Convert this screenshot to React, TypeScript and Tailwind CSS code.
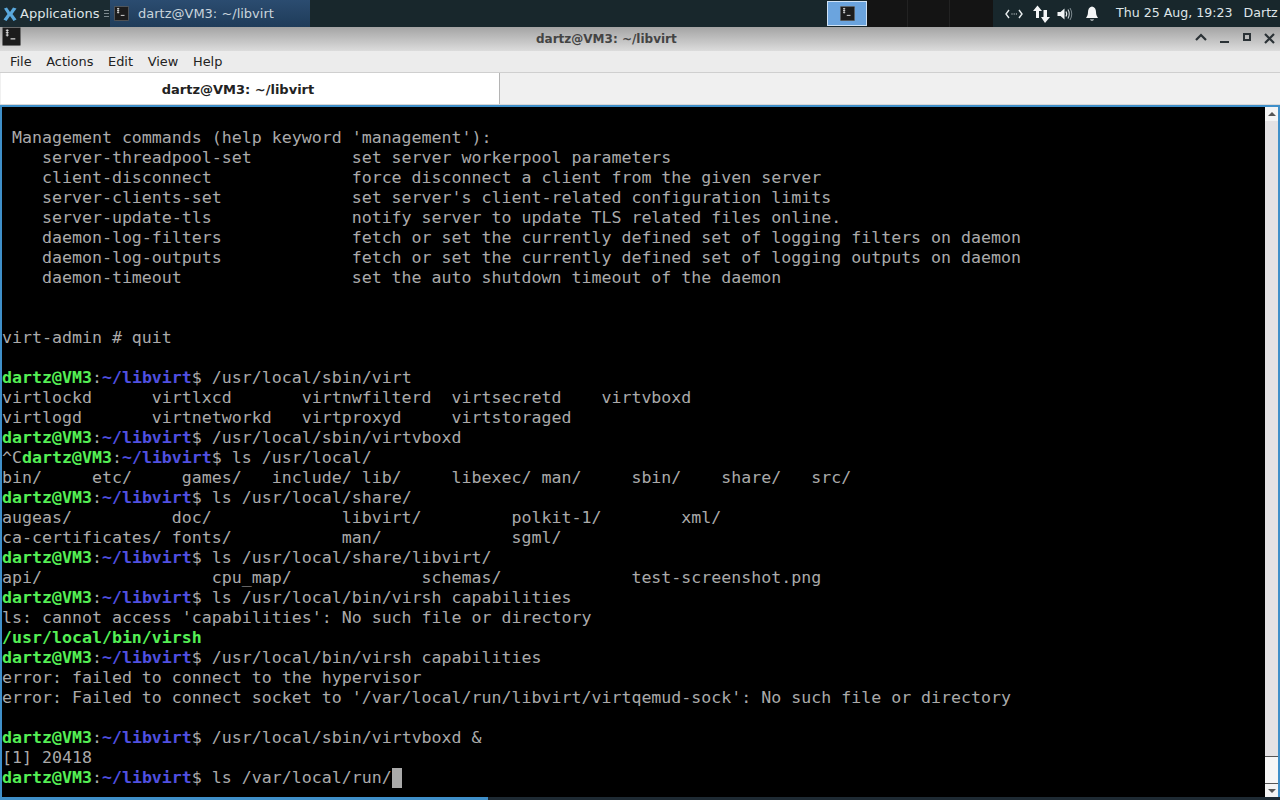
const Prompt = ({ cmd }: { cmd: string }) => (
  <>
    <span className="font-bold text-[#55f055]">dartz@VM3</span>
    <span>:</span>
    <span className="font-bold text-[#5050e0]">~/libvirt</span>
    <span>$ {cmd}</span>
  </>
);

const TermIcon = ({ size = 20 }: { size?: number }) => (
  <svg width={size} height={size} viewBox="0 0 20 20" className="shrink-0">
    <rect x="0.5" y="0.5" width="19" height="19" rx="1" fill="#1c1c1c" stroke="#6a6a6a" />
    <path d="M4 3.5h3M4 6h3M4 8.500h3M5.500 2.500v7.500" stroke="#e8e8e8" strokeWidth="1" fill="none" />
    <path d="M9 12.500h5" stroke="#e8e8e8" strokeWidth="1.200" />
  </svg>
);

const lines: React.ReactNode[] = [
  "",
  " Management commands (help keyword 'management'):",
  "    server-threadpool-set          set server workerpool parameters",
  "    client-disconnect              force disconnect a client from the given server",
  "    server-clients-set             set server's client-related configuration limits",
  "    server-update-tls              notify server to update TLS related files online.",
  "    daemon-log-filters             fetch or set the currently defined set of logging filters on daemon",
  "    daemon-log-outputs             fetch or set the currently defined set of logging outputs on daemon",
  "    daemon-timeout                 set the auto shutdown timeout of the daemon",
  "",
  "",
  "virt-admin # quit",
  "",
  <Prompt cmd="/usr/local/sbin/virt" />,
  "virtlockd      virtlxcd       virtnwfilterd  virtsecretd    virtvboxd",
  "virtlogd       virtnetworkd   virtproxyd     virtstoraged",
  <Prompt cmd="/usr/local/sbin/virtvboxd" />,
  <>^C<Prompt cmd="ls /usr/local/" /></>,
  "bin/     etc/     games/   include/ lib/     libexec/ man/     sbin/    share/   src/",
  <Prompt cmd="ls /usr/local/share/" />,
  "augeas/          doc/             libvirt/         polkit-1/        xml/",
  "ca-certificates/ fonts/           man/             sgml/",
  <Prompt cmd="ls /usr/local/share/libvirt/" />,
  "api/                 cpu_map/             schemas/             test-screenshot.png",
  <Prompt cmd="ls /usr/local/bin/virsh capabilities" />,
  "ls: cannot access 'capabilities': No such file or directory",
  <span className="font-bold text-[#55f055]">/usr/local/bin/virsh</span>,
  <Prompt cmd="/usr/local/bin/virsh capabilities" />,
  "error: failed to connect to the hypervisor",
  "error: Failed to connect socket to '/var/local/run/libvirt/virtqemud-sock': No such file or directory",
  "",
  <Prompt cmd="/usr/local/sbin/virtvboxd &" />,
  "[1] 20418",
  <>
    <Prompt cmd="ls /var/local/run/" />
    <span className="inline-block w-[10px] h-[20px] align-top bg-[#aaaaaa]" />
  </>,
];

export default function App() {
  return (
    <div className="w-[1280px] h-[800px] overflow-hidden flex flex-col bg-black font-['DejaVu_Sans',sans-serif]">
      {/* panel */}
      <div className="h-[27px] shrink-0 flex items-center bg-[#18272c] text-[13px] text-[#dfe5e8]">
        <div className="w-[110px] flex items-center pl-[2px] shrink-0 bg-[#1b2b31] h-full">
          <svg width="16" height="16" viewBox="0 0 16 16" className="shrink-0">
            <path d="M2 2.500 L5 1.500 L8 6 L11 1.500 L14.500 2.500 L10.500 8 L14.500 13.500 L11.500 15 L8 10 L4.500 15 L1.500 13.500 L5.500 8 Z" fill="#5aa8dc" />
          </svg>
          <span className="ml-[2px]">Applications</span>
          <span className="ml-[5px] flex flex-col gap-[2px]">
            <span className="block w-[5px] h-px bg-[#7d8a8f]" />
            <span className="block w-[5px] h-px bg-[#7d8a8f]" />
            <span className="block w-[5px] h-px bg-[#7d8a8f]" />
          </span>
        </div>
        <div className="w-[200px] h-full shrink-0 flex items-center pl-[4px] bg-gradient-to-b from-[#2b4c70] to-[#1f3c5a]">
          <TermIcon size={15} />
          <span className="ml-[9px] text-[#c9d4dc]">dartz@VM3: ~/libvirt</span>
        </div>
        <div className="flex-1" />
        <div className="w-[40px] h-[25px] shrink-0 bg-[#6ba4de] border border-[#cfe2f5] flex items-center justify-center">
          <TermIcon size={15} />
        </div>
        <div className="w-[126px] h-full shrink-0 bg-[#141414] flex">
          <div className="w-[41px] border-r border-[#222]" />
          <div className="w-[42px] border-r border-[#222]" />
        </div>
        <div className="w-[287px] shrink-0 flex items-center h-full">
          <svg width="18" height="10" viewBox="0 0 18 10" className="ml-[12px] shrink-0 text-[#e8edef]">
            <path d="M4 1 L1 5 L4 9 M14 1 L17 5 L14 9" stroke="currentColor" strokeWidth="1.400" fill="none" />
            <path d="M6.500 5h1M8.700 5h1M10.900 5h1" stroke="currentColor" strokeWidth="1.200" />
          </svg>
          <svg width="18" height="20" viewBox="0 0 18 20" className="ml-[9px] shrink-0 mt-[3px]">
            <path d="M1 6 L5.500 0.500 L10 6 H7 V13 H4 V6 Z" fill="#f4f6f7" />
            <path d="M9 12 L13 18 L18 12 H15 V5 H11.500 V12 Z" fill="#f4f6f7" />
          </svg>
          <svg width="16" height="14" viewBox="0 0 16 14" className="ml-[7px] shrink-0">
            <path d="M0.500 5 H3.500 L7.500 1.500 V12.500 L3.500 9 H0.500 Z" fill="#f0f3f4" />
            <path d="M9 4.500 Q10.500 7 9 9.500" stroke="#f0f3f4" strokeWidth="1.200" fill="none" />
            <path d="M11 2.500 Q13.500 7 11 11.500" stroke="#c8d0d3" strokeWidth="1.100" fill="none" />
            <path d="M13 1 Q16.500 7 13 13" stroke="#7d8a8f" strokeWidth="1" fill="none" />
          </svg>
          <svg width="14" height="16" viewBox="0 0 14 16" className="ml-[12px] shrink-0">
            <path d="M7 0.500 C4 1 3 3.500 3 6 C3 9 2 10.500 1 12 H13 C12 10.500 11 9 11 6 C11 3.500 10 1 7 0.500 Z" fill="#f4f6f7" />
            <path d="M5 13.500 H9 C8.600 15 5.400 15 5 13.500 Z" fill="#f4f6f7" />
          </svg>
          <span className="ml-[17px] whitespace-pre text-[12.600px]">Thu 25 Aug, 19:23</span>
          <span className="ml-[11px] whitespace-pre text-[12.600px]">Dartz</span>
        </div>
      </div>

      {/* title bar */}
      <div className="h-[24px] shrink-0 flex items-center bg-gradient-to-b from-[#a4a4a4] to-[#dcdcdc] relative">
        <div className="absolute left-[2px] top-0">
          <TermIcon size={19} />
        </div>
        <div className="pl-[536px] text-[12px] font-bold text-[#444]">dartz@VM3: ~/libvirt</div>
        <svg width="90" height="16" viewBox="0 0 90 16" className="absolute right-0 top-[3px] text-[#2b3236]">
          <path d="M6 10 L11 5 L16 10" stroke="currentColor" strokeWidth="2.200" fill="none" />
          <path d="M30 12 H39" stroke="currentColor" strokeWidth="2" />
          <rect x="54" y="4" width="6" height="6" stroke="currentColor" strokeWidth="2" fill="none" />
          <path d="M75 4 L84 13 M84 4 L75 13" stroke="currentColor" strokeWidth="2.200" />
        </svg>
      </div>

      {/* menu */}
      <div className="h-[22px] shrink-0 flex items-center gap-[14.700px] pl-[10px] bg-[#ececec] border-b border-[#cfcfcf] text-[12.900px] text-[#222]">
        <span>File</span>
        <span>Actions</span>
        <span>Edit</span>
        <span>View</span>
        <span>Help</span>
      </div>

      {/* tabs */}
      <div className="h-[32px] shrink-0 flex bg-[#f0f0f0] border-b border-[#d8d8d8]">
        <div className="w-[499px] ml-[1px] h-full bg-white border-r border-[#b4b4b4] flex items-center justify-center pr-[24px] pt-[2px] text-[13px] font-bold text-[#222]">
          dartz@VM3: ~/libvirt
        </div>
      </div>

      {/* terminal */}
      <div className="flex-1 min-h-0 flex flex-col bg-[#3f8fc9] pt-[2px] px-[2px]">
        <div className="flex-1 min-h-0 flex bg-black">
          <div className="flex-1 min-w-0 overflow-hidden pt-px font-['DejaVu_Sans_Mono',monospace] text-[16.600px] leading-[20px] text-[#aaaaaa] whitespace-pre">
            {lines.map((l, i) => (
              <div key={i} className="h-[20px]">{l}</div>
            ))}
          </div>
          <div className="w-[13px] shrink-0 flex flex-col bg-[#e4e2e4]">
            <div className="h-[14px] bg-[#f4f4f4] flex items-center justify-center">
              <span className="block w-0 h-0 border-x-[4px] border-x-transparent border-b-[4px] border-b-[#555]" />
            </div>
            <div className="flex-1" />
            <div className="h-[28px] bg-[#f6f6f6] border-y border-[#555]" />
            <div className="h-[13px] bg-[#f4f4f4] flex items-center justify-center">
              <span className="block w-0 h-0 border-x-[4px] border-x-transparent border-t-[4px] border-t-[#555]" />
            </div>
          </div>
        </div>
        <div className="h-[3px] shrink-0 -mx-[2px] flex bg-[#1e2a33]">
          <div className="w-[488px] bg-[#3f8fc9]" />
        </div>
      </div>
    </div>
  );
}
